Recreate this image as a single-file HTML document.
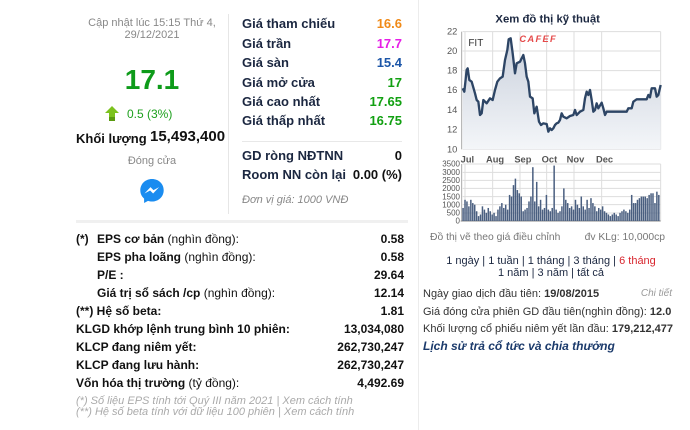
<!DOCTYPE html>
<html><head><meta charset="utf-8"><style>
*{margin:0;padding:0;box-sizing:border-box}
body{width:690px;height:430px;background:#fff;font-family:"Liberation Sans",Arial,sans-serif;position:relative;overflow:hidden;color:#111}
.a{position:absolute;white-space:nowrap}
.g{color:#888}
.lbl{font-weight:bold;font-size:13px;color:#1b2740}
.val{font-weight:bold;font-size:13px;text-align:right;right:288px}
.bl{font-size:12px;color:#111}
.bl b{font-weight:bold}
.bv{font-size:12px;font-weight:bold;right:286px;text-align:right}
.rt{font-size:11px;color:#333}
</style></head><body>
<div class="a" style="left:228px;top:14px;width:1px;height:200px;background:#e6e6e6"></div>
<div class="a" style="left:418px;top:0;width:1px;height:430px;background:#ececec"></div>
<div class="a" style="left:76px;top:220px;width:332px;height:3px;background:#f0f0f0"></div>

<div class="a g" style="left:76px;width:152px;top:17px;font-size:11px;text-align:center;line-height:12px;white-space:normal">Cập nhật lúc 15:15 Thứ 4,<br>29/12/2021</div>
<div class="a" style="left:76px;width:152px;top:64px;text-align:center;font-size:28px;font-weight:bold;color:#0e9b1a">17.1</div>
<svg class="a" style="left:105px;top:106px" width="14" height="15" viewBox="0 0 14 15"><path d="M7 0L14 7H10V15H4V7H0Z" fill="#7cc21e"/><path d="M4 11H10V15H4Z" fill="#5a9a10"/></svg>
<div class="a" style="left:127px;top:107px;font-size:12px;color:#1ea01e">0.5 (3%)</div>
<div class="a" style="left:76px;top:131px;font-size:13px;font-weight:bold">Khối lượng</div>
<div class="a" style="left:150px;top:128px;font-size:15px;font-weight:bold">15,493,400</div>
<div class="a g" style="left:76px;width:152px;top:155px;font-size:11px;text-align:center">Đóng cửa</div>
<svg class="a" style="left:139px;top:178px" width="26" height="26" viewBox="0 0 26 26"><path d="M13 1C6.4 1 1.3 5.9 1.3 12.3c0 3.4 1.4 6.3 3.8 8.3V25l3.9-2.1c1.2.4 2.6.6 4 .6 6.6 0 11.7-4.9 11.7-11.3S19.6 1 13 1z" fill="#1a8cf0"/><path d="M5.5 15.5l6-6.4 3 3 5.6-3-6 6.4-3-3z" fill="#fff"/></svg>

<div class="a lbl" style="left:242px;top:16px">Giá tham chiếu</div><div class="a val" style="top:16px;color:#f08a18">16.6</div>
<div class="a lbl" style="left:242px;top:36px">Giá trần</div><div class="a val" style="top:36px;color:#e61ee6">17.7</div>
<div class="a lbl" style="left:242px;top:55px">Giá sàn</div><div class="a val" style="top:55px;color:#1c56a8">15.4</div>
<div class="a lbl" style="left:242px;top:75px">Giá mở cửa</div><div class="a val" style="top:75px;color:#12a012">17</div>
<div class="a lbl" style="left:242px;top:94px">Giá cao nhất</div><div class="a val" style="top:94px;color:#12a012">17.65</div>
<div class="a lbl" style="left:242px;top:113px">Giá thấp nhất</div><div class="a val" style="top:113px;color:#12a012">16.75</div>
<div class="a" style="left:242px;top:141px;width:160px;height:1px;background:#e8e8e8"></div>
<div class="a lbl" style="left:242px;top:148px">GD ròng NĐTNN</div><div class="a val" style="top:148px;color:#111">0</div>
<div class="a lbl" style="left:242px;top:167px">Room NN còn lại</div><div class="a val" style="top:167px;color:#111">0.00 (%)</div>
<div class="a g" style="left:242px;top:194px;font-size:11px;font-style:italic">Đơn vị giá: 1000 VNĐ</div>

<div class="a bl" style="left:76px;top:232px"><b>(*)</b></div>
<div class="a bl" style="left:97px;top:232px"><b>EPS cơ bản</b> (nghìn đồng):</div><div class="a bv" style="top:232px">0.58</div>
<div class="a bl" style="left:97px;top:250px"><b>EPS pha loãng</b> (nghìn đồng):</div><div class="a bv" style="top:250px">0.58</div>
<div class="a bl" style="left:97px;top:268px"><b>P/E :</b></div><div class="a bv" style="top:268px">29.64</div>
<div class="a bl" style="left:97px;top:286px"><b>Giá trị sổ sách /cp</b> (nghìn đồng):</div><div class="a bv" style="top:286px">12.14</div>
<div class="a bl" style="left:76px;top:304px"><b>(**) Hệ số beta:</b></div><div class="a bv" style="top:304px">1.81</div>
<div class="a bl" style="left:76px;top:322px"><b>KLGD khớp lệnh trung bình 10 phiên:</b></div><div class="a bv" style="top:322px">13,034,080</div>
<div class="a bl" style="left:76px;top:340px"><b>KLCP đang niêm yết:</b></div><div class="a bv" style="top:340px">262,730,247</div>
<div class="a bl" style="left:76px;top:358px"><b>KLCP đang lưu hành:</b></div><div class="a bv" style="top:358px">262,730,247</div>
<div class="a bl" style="left:76px;top:376px"><b>Vốn hóa thị trường</b> (tỷ đồng):</div><div class="a bv" style="top:376px">4,492.69</div>
<div class="a g" style="left:76px;top:396px;font-size:11px;font-style:italic;line-height:11px;color:#aaa">(*) Số liệu EPS tính tới Quý III năm 2021 | Xem cách tính<br>(**) Hệ số beta tính với dữ liệu 100 phiên | Xem cách tính</div>

<svg class="a" style="left:420px;top:0" width="270" height="250" viewBox="0 0 810 750" font-family="Liberation Sans, Arial, sans-serif">
<text x="383" y="68" font-size="34" font-weight="bold" fill="#1b2740" text-anchor="middle">Xem đồ thị kỹ thuật</text>
<g stroke="#ddd" stroke-width="3">
<line x1="128" y1="95" x2="722" y2="95"/><line x1="128" y1="153" x2="722" y2="153"/><line x1="128" y1="212" x2="722" y2="212"/><line x1="128" y1="270" x2="722" y2="270"/><line x1="128" y1="330" x2="722" y2="330"/><line x1="128" y1="388" x2="722" y2="388"/><line x1="128" y1="448" x2="722" y2="448"/>
<line x1="135" y1="95" x2="135" y2="448"/><line x1="218" y1="95" x2="218" y2="448"/><line x1="300" y1="95" x2="300" y2="448"/><line x1="380" y1="95" x2="380" y2="448"/><line x1="462" y1="95" x2="462" y2="448"/><line x1="545" y1="95" x2="545" y2="448"/><line x1="722" y1="95" x2="722" y2="448"/>
<line x1="128" y1="492" x2="722" y2="492"/><line x1="128" y1="517" x2="722" y2="517"/><line x1="128" y1="541" x2="722" y2="541"/><line x1="128" y1="565" x2="722" y2="565"/><line x1="128" y1="590" x2="722" y2="590"/><line x1="128" y1="614" x2="722" y2="614"/><line x1="128" y1="639" x2="722" y2="639"/>
<line x1="135" y1="492" x2="135" y2="663"/><line x1="218" y1="492" x2="218" y2="663"/><line x1="300" y1="492" x2="300" y2="663"/><line x1="380" y1="492" x2="380" y2="663"/><line x1="462" y1="492" x2="462" y2="663"/><line x1="545" y1="492" x2="545" y2="663"/><line x1="722" y1="492" x2="722" y2="663"/>
</g>
<line x1="125" y1="95" x2="125" y2="448" stroke="#aaa" stroke-width="3"/>
<line x1="125" y1="492" x2="125" y2="663" stroke="#aaa" stroke-width="3"/>
<line x1="122" y1="663" x2="722" y2="663" stroke="#888" stroke-width="3"/>
<g font-size="28" fill="#555" text-anchor="end">
<text x="112" y="104">22</text><text x="112" y="162">20</text><text x="112" y="221">18</text><text x="112" y="279">16</text><text x="112" y="339">14</text><text x="112" y="397">12</text><text x="112" y="457">10</text>
<text x="120" y="500" font-size="24">3500</text><text x="120" y="525" font-size="24">3000</text><text x="120" y="549" font-size="24">2500</text><text x="120" y="573" font-size="24">2000</text><text x="120" y="598" font-size="24">1500</text><text x="120" y="622" font-size="24">1000</text><text x="120" y="647" font-size="24">500</text><text x="120" y="671" font-size="24">0</text>
</g>
<g font-size="28" fill="#555" font-weight="bold">
<text x="122" y="488">Jul</text><text x="198" y="488">Aug</text><text x="283" y="488">Sep</text><text x="365" y="488">Oct</text><text x="440" y="488">Nov</text><text x="528" y="488">Dec</text>
</g>
<text x="145" y="138" font-size="30" fill="#333">FIT</text>
<text x="298" y="126" font-size="28" font-weight="bold" fill="#e54a4a" letter-spacing="4" font-style="italic">CAFEF</text>
<defs><linearGradient id="gr" x1="0" y1="0" x2="0" y2="1"><stop offset="0" stop-color="#c9d0dc"/><stop offset="1" stop-color="#f4f6f9"/></linearGradient></defs>
<path id="ln" fill="url(#gr)" stroke="none" d=""/>
<path id="ln2" fill="none" stroke="#2d4565" stroke-width="7" stroke-linejoin="round" d=""/>
<g id="vb" fill="#4a5f80"></g>
<text x="30" y="720" font-size="31" fill="#777">Đồ thị vẽ theo giá điều chỉnh</text>
<text x="735" y="720" font-size="31" fill="#777" text-anchor="end">đv KLg: 10,000cp</text>
</svg>
<script>
var p=[128,265,133,275,140,210,143,205,148,240,155,245,165,280,170,300,175,305,180,345,185,340,190,300,200,310,210,295,218,300,225,270,232,245,240,235,248,230,255,180,262,150,266,118,272,115,278,160,285,220,290,190,300,185,310,165,315,190,320,230,325,245,330,290,338,295,343,340,350,320,357,365,363,375,370,370,380,372,385,395,390,385,395,390,400,385,405,375,410,370,415,368,420,360,425,340,430,350,440,355,450,348,460,345,465,330,470,345,480,335,490,330,495,295,500,275,505,285,510,270,515,300,520,335,525,330,530,310,535,325,545,308,550,325,555,345,560,335,570,335,620,335,625,325,635,325,640,305,650,298,680,298,685,285,690,292,695,265,705,265,710,290,715,285,722,255];
var d="M"+p[0]+" "+p[1];for(var i=2;i<p.length;i+=2)d+=" L"+p[i]+" "+p[i+1];
document.getElementById('ln2').setAttribute('d',d);
document.getElementById('ln').setAttribute('d',d+" L722 448 L128 448Z");
var v=[800,1300,1200,900,1300,1100,1000,600,300,400,900,700,500,800,600,400,500,300,700,900,1100,800,1000,700,1600,1500,2200,2600,1900,1700,1500,600,700,800,1200,1500,3300,1200,2400,900,1300,700,800,1600,700,600,800,3400,700,500,600,900,2000,1300,1100,800,900,700,1300,1000,800,1500,900,700,1300,800,1400,1100,900,600,800,700,900,600,500,400,300,400,500,400,300,500,600,700,600,500,700,1600,1100,1100,1300,1400,1500,1500,1500,1400,1600,1700,1700,1100,1800,1600];
var g=document.getElementById('vb'),s="";var step=(720-127)/v.length;
for(var j=0;j<v.length;j++){var h=v[j]*0.0489;s+='<rect x="'+(127+j*step).toFixed(1)+'" y="'+(663-h).toFixed(1)+'" width="4.5" height="'+h.toFixed(1)+'"/>';}
g.innerHTML=s;
</script>
<div class="a" style="left:420px;width:262px;top:255px;font-size:11px;text-align:center;line-height:12px;color:#1b2740">1 ngày | 1 tuần | 1 tháng | 3 tháng | <span style="color:#d8262e">6 tháng</span><br>1 năm | 3 năm | tất cả</div>
<div class="a rt" style="left:423px;top:288px">Ngày giao dịch đầu tiên: <b>19/08/2015</b></div>
<div class="a" style="right:18px;top:288px;font-size:10px;font-style:italic;color:#999">Chi tiết</div>
<div class="a rt" style="left:423px;top:306px">Giá đóng cửa phiên GD đầu tiên(nghìn đồng): <b>12.0</b></div>
<div class="a rt" style="left:423px;top:323px">Khối lượng cổ phiếu niêm yết lần đầu: <b>179,212,477</b></div>
<div class="a" style="left:423px;top:339px;font-size:12px;font-weight:bold;font-style:italic;color:#1b3a6b">Lịch sử trả cổ tức và chia thưởng</div>
</body></html>
